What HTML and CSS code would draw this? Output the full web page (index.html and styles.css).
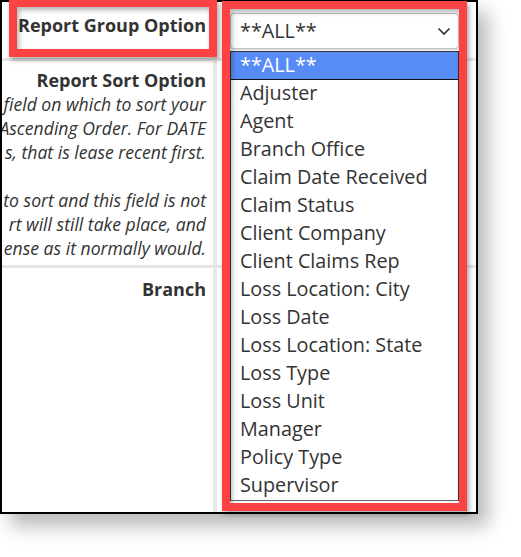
FILE: index.html
```
<!DOCTYPE html>
<html>
<head>
<meta charset="utf-8">
<link rel="stylesheet" href="styles.css">
</head>
<body>
<div class="stage">
  <div class="frame">
    <div class="row row-group">
      <div class="label"><span class="label-title">Report Group Option</span></div>
      <div class="value">
        <div class="select">
          <span class="select-text">**ALL**</span>
          <svg class="chevron" width="14" height="9" viewBox="0 0 14 9"><path d="M1.5 1.5 L7 7 L12.5 1.5" fill="none" stroke="#333" stroke-width="1.7"/></svg>
        </div>
      </div>
    </div>
    <div class="row row-sort">
      <div class="label">
        <span class="label-title">Report Sort Option</span>
        <span class="hint">field on which to sort your</span>
        <span class="hint">Ascending Order. For DATE</span>
        <span class="hint">s, that is lease recent first.</span>
        <span class="hint blank">&nbsp;</span>
        <span class="hint">to sort and this field is not</span>
        <span class="hint">rt will still take place, and</span>
        <span class="hint">ense as it normally would.</span>
      </div>
      <div class="value"></div>
    </div>
    <div class="row row-branch">
      <div class="label"><span class="label-title">Branch</span></div>
      <div class="value"></div>
    </div>
    <ul class="listbox">
      <li class="option selected">**ALL**</li>
      <li class="option">Adjuster</li>
      <li class="option">Agent</li>
      <li class="option">Branch Office</li>
      <li class="option">Claim Date Received</li>
      <li class="option">Claim Status</li>
      <li class="option">Client Company</li>
      <li class="option">Client Claims Rep</li>
      <li class="option">Loss Location: City</li>
      <li class="option">Loss Date</li>
      <li class="option">Loss Location: State</li>
      <li class="option">Loss Type</li>
      <li class="option">Loss Unit</li>
      <li class="option">Manager</li>
      <li class="option">Policy Type</li>
      <li class="option">Supervisor</li>
    </ul>
  </div>
  <div class="mark mark-label"></div>
  <div class="mark mark-list"></div>
</div>
</body>
</html>
```
FILE: styles.css
```
html, body {
  margin: 0;
  padding: 0;
  background: #fff;
}
.stage {
  position: relative;
  width: 521px;
  height: 557px;
  overflow: hidden;
  font-family: "Open Sans", "Liberation Sans", sans-serif;
  color: #333;
}
.frame {
  position: relative;
  width: 474px;
  height: 510px;
  border: 2px solid #000;
  background: #fff;
  box-shadow: 10px 12px 18px rgba(0, 0, 0, 0.28);
  display: flex;
  flex-direction: column;
}
.row {
  display: flex;
}
.row-group {
  height: 56px;
}
.row-sort {
  height: 204px;
  border-top: 3px solid #e6e6e6;
}
.row-branch {
  flex: 1;
  border-top: 3px solid #e6e6e6;
}
.label {
  width: 204px;
  padding-right: 7px;
  display: flex;
  flex-direction: column;
  align-items: flex-end;
  overflow: hidden;
}
.value {
  flex: 1;
  border-left: 4px solid #e8e8e8;
}
.label-title {
  font-weight: 700;
  font-size: 18px;
  line-height: 24px;
  white-space: nowrap;
}
.row-group .label { padding-top: 11px; }
.row-sort .label { padding-top: 7px; }
.row-branch .label { padding-top: 9px; }
.hint {
  font-style: italic;
  font-size: 17.6px;
  line-height: 24px;
  white-space: nowrap;
}
.select {
  margin: 11px 17px 0 13px;
  height: 34px;
  border: 1px solid #c4c4c4;
  border-radius: 4px;
  box-shadow: 0 1px 2px rgba(0, 0, 0, 0.2);
  display: flex;
  align-items: center;
  justify-content: space-between;
  padding: 0 7px 0 9px;
  background: #fff;
}
.select-text {
  font-size: 19.8px;
  line-height: 26px;
}
.chevron {
  display: block;
}
.listbox {
  position: absolute;
  left: 228px;
  top: 49px;
  width: 227px;
  margin: 0;
  padding: 0;
  list-style: none;
  background: #fff;
  border: 1px solid #333;
  border-bottom-color: #666;
}
.option {
  height: 28px;
  line-height: 26px;
  font-size: 19.8px;
  padding-left: 9px;
  white-space: nowrap;
}
.option.selected {
  background: #578cf7;
  color: #fff;
  box-shadow: inset 0 -1px 0 #111;
}
.mark {
  position: absolute;
  border: 8px solid #fd4244;
  box-shadow: 2px 3px 5px rgba(0, 0, 0, 0.35), inset 2px 3px 5px rgba(0, 0, 0, 0.3);
}
.mark-label {
  left: 9px;
  top: -1px;
  width: 192px;
  height: 42px;
}
.mark-list {
  left: 222px;
  top: 1px;
  width: 229px;
  height: 494px;
}
```
